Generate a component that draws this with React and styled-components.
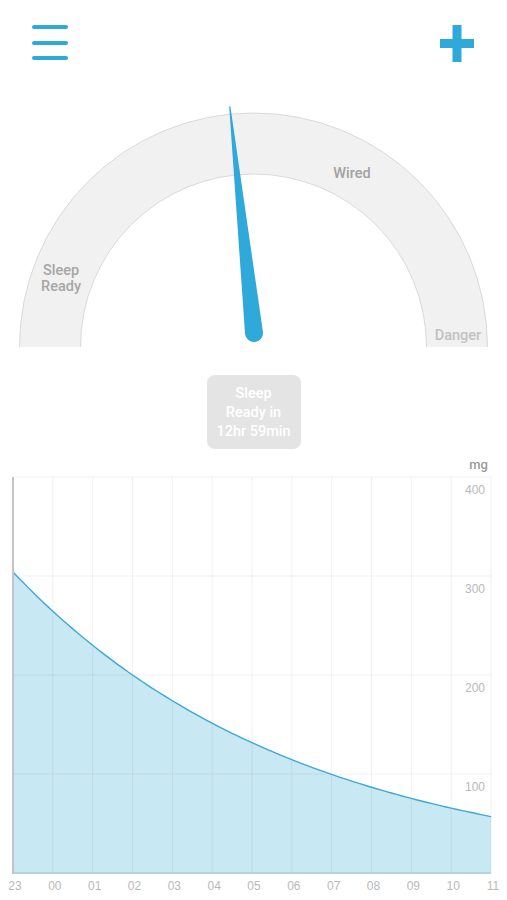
import React from "react";
import styled, { createGlobalStyle } from "styled-components";

const BLUE = "#2ea9d9";

const GlobalStyle = createGlobalStyle`
  html, body {
    margin: 0;
    padding: 0;
    background: #ffffff;
    font-family: "Liberation Sans", Arial, sans-serif;
  }
`;

const Screen = styled.div`
  width: 507px;
  height: 900px;
  overflow: hidden;
  background: #fff;
`;

const Header = styled.header`
  height: 95px;
  box-sizing: border-box;
  padding: 25px 32px 0 32px;
  display: flex;
  justify-content: space-between;
  align-items: flex-start;
`;

const IconButton = styled.button`
  border: 0;
  padding: 0;
  background: none;
  width: ${(p) => p.$w}px;
  height: 38px;
  display: block;
  cursor: pointer;
`;

const GaugeSvg = styled.svg`
  display: block;
  width: 507px;
  height: 260px;
`;

const Badge = styled.div`
  width: 94px;
  height: 74px;
  margin: 20px auto 0;
  box-sizing: border-box;
  border-radius: 8px;
  background: #e4e4e4;
  color: #fff;
  font-family: Roboto, "Liberation Sans", Arial, sans-serif;
  font-weight: 500;
  font-size: 14.5px;
  line-height: 19px;
  text-align: center;
  display: flex;
  flex-direction: column;
  justify-content: center;
`;

const ChartSection = styled.section`
  margin-top: 6px;
`;

const Unit = styled.div`
  height: 20px;
  line-height: 20px;
  padding-right: 19px;
  text-align: right;
  font-family: Roboto, "Liberation Sans", Arial, sans-serif;
  font-size: 13px;
  font-weight: 500;
  color: #9a9a9a;
`;

const ChartSvg = styled.svg`
  display: block;
  width: 507px;
  height: 425px;
`;

function MenuIcon() {
  return (
    <svg width="36" height="38" viewBox="0 0 36 38">
      <g stroke={BLUE} strokeWidth="4" strokeLinecap="round">
        <line x1="2" y1="2" x2="34" y2="2" />
        <line x1="2" y1="18" x2="34" y2="18" />
        <line x1="2" y1="33" x2="34" y2="33" />
      </g>
    </svg>
  );
}

function PlusIcon() {
  return (
    <svg width="36" height="38" viewBox="0 0 36 38">
      <rect x="1" y="14" width="34" height="9" fill={BLUE} />
      <rect x="13.5" y="0" width="9" height="37" fill={BLUE} />
    </svg>
  );
}

function Gauge() {
  const cx = 253.5;
  const cy = 252;
  const R = 234;
  const r = 173;
  const band = `M ${cx - R} ${cy} A ${R} ${R} 0 0 1 ${cx + R} ${cy} L ${cx + r} ${cy} A ${r} ${r} 0 0 0 ${cx - r} ${cy} Z`;
  const label = { fontSize: 14.5, fontWeight: 500, fontFamily: "Roboto, Liberation Sans, Arial, sans-serif", textAnchor: "middle" };
  return (
    <GaugeSvg viewBox="0 0 507 260">
      <path d={band} fill="#f1f1f1" />
      <path d={`M ${cx - R} ${cy} A ${R} ${R} 0 0 1 ${cx + R} ${cy}`} fill="none" stroke="#dadada" strokeWidth="1" />
      <path d={`M ${cx - r} ${cy} A ${r} ${r} 0 0 1 ${cx + r} ${cy}`} fill="none" stroke="#dadada" strokeWidth="1" />
      <text x="61" y="180" fill="#a6a6a6" {...label}>Sleep</text>
      <text x="61" y="196" fill="#a6a6a6" {...label}>Ready</text>
      <text x="352" y="83" fill="#a2a2a2" {...label}>Wired</text>
      <text x="458" y="245" fill="#c2c2c2" {...label}>Danger</text>
      <g transform="translate(254 238) rotate(-6.1)">
        <path d="M -9 0 L -0.6 -228 L 0.6 -228 L 9 0 A 9 9 0 0 1 -9 0 Z" fill={BLUE} />
      </g>
    </GaugeSvg>
  );
}

const X0 = 13;
const X1 = 491;
const STEP = (X1 - X0) / 12;
const Y_TOP = 2;
const Y_BOT = 398;
const PX_PER_MG = (Y_BOT - Y_TOP) / 400;
const HOURS = ["23", "00", "01", "02", "03", "04", "05", "06", "07", "08", "09", "10", "11"];

function Chart() {
  const start = 304;
  const end = 57;
  const k = Math.pow(end / start, 1 / 12);
  const pts = [];
  for (let i = 0; i <= 96; i++) {
    const t = (i / 96) * 12;
    const v = start * Math.pow(k, t);
    pts.push([X0 + t * STEP, Y_BOT - v * PX_PER_MG]);
  }
  const line = pts.map((p, i) => `${i ? "L" : "M"} ${p[0].toFixed(2)} ${p[1].toFixed(2)}`).join(" ");
  const area = `${line} L ${X1} ${Y_BOT} L ${X0} ${Y_BOT} Z`;
  const tick = { fill: "#b9b9b9", fontSize: 12, fontFamily: "Liberation Sans, Arial, sans-serif" };

  return (
    <ChartSvg viewBox="0 0 507 425">
      <path d={area} fill="#c8e8f4" />
      <g stroke="rgba(0,0,0,0.055)" strokeWidth="1">
        {HOURS.map((h, i) => (
          <line key={h} x1={X0 + i * STEP} y1={Y_TOP} x2={X0 + i * STEP} y2={Y_BOT} />
        ))}
        {[0, 1, 2, 3].map((i) => (
          <line key={i} x1={X0} y1={Y_TOP + i * 99} x2={X1} y2={Y_TOP + i * 99} />
        ))}
      </g>
      <path d={line} fill="none" stroke="#3aa9d6" strokeWidth="1.4" />
      <line x1={X0} y1={Y_BOT} x2={X1} y2={Y_BOT} stroke="#b4d3df" strokeWidth="2" />
      <line x1={X0} y1={Y_TOP} x2={X0} y2={Y_BOT + 1} stroke="#c4c4c4" strokeWidth="2" />
      {[400, 300, 200, 100].map((v, i) => (
        <text key={v} x="485" y={Y_TOP + i * 99 + 16.5} textAnchor="end" {...tick}>{v}</text>
      ))}
      {HOURS.map((h, i) => (
        <text key={h} x={X0 + i * STEP + 2} y="415" textAnchor="middle" {...tick}>{h}</text>
      ))}
    </ChartSvg>
  );
}

export default function App() {
  return (
    <Screen>
      <GlobalStyle />
      <Header>
        <IconButton $w={36} aria-label="Menu"><MenuIcon /></IconButton>
        <IconButton $w={36} aria-label="Add"><PlusIcon /></IconButton>
      </Header>
      <Gauge />
      <Badge>
        <span>Sleep</span>
        <span>Ready in</span>
        <span>12hr 59min</span>
      </Badge>
      <ChartSection>
        <Unit>mg</Unit>
        <Chart />
      </ChartSection>
    </Screen>
  );
}
